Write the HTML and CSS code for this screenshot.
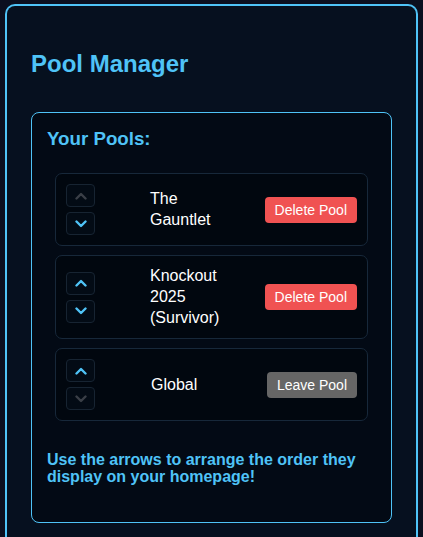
FILE: index.html
```html
<!DOCTYPE html>
<html>
<head>
<meta charset="utf-8">
<link rel="stylesheet" href="styles.css">
</head>
<body>
<div class="card">
  <h2 class="title">Pool Manager</h2>
  <div class="panel">
    <h3 class="panel-title">Your Pools:</h3>
    <ul class="pools">
      <li class="pool">
        <div class="arrows">
          <button class="arrow disabled"><svg viewBox="0 0 12 8" width="12" height="8"><path d="M1.5 6.5 L6 2 L10.5 6.5" /></svg></button>
          <button class="arrow"><svg viewBox="0 0 12 8" width="12" height="8"><path d="M1.5 1.5 L6 6 L10.5 1.5" /></svg></button>
        </div>
        <div class="name">The Gauntlet</div>
        <button class="action delete">Delete Pool</button>
      </li>
      <li class="pool">
        <div class="arrows">
          <button class="arrow"><svg viewBox="0 0 12 8" width="12" height="8"><path d="M1.5 6.5 L6 2 L10.5 6.5" /></svg></button>
          <button class="arrow"><svg viewBox="0 0 12 8" width="12" height="8"><path d="M1.5 1.5 L6 6 L10.5 1.5" /></svg></button>
        </div>
        <div class="name">Knockout 2025 (Survivor)</div>
        <button class="action delete">Delete Pool</button>
      </li>
      <li class="pool">
        <div class="arrows">
          <button class="arrow"><svg viewBox="0 0 12 8" width="12" height="8"><path d="M1.5 6.5 L6 2 L10.5 6.5" /></svg></button>
          <button class="arrow disabled"><svg viewBox="0 0 12 8" width="12" height="8"><path d="M1.5 1.5 L6 6 L10.5 1.5" /></svg></button>
        </div>
        <div class="name global">Global</div>
        <button class="action leave">Leave Pool</button>
      </li>
    </ul>
    <p class="hint">Use the arrows to arrange the order they display on your homepage!</p>
  </div>
</div>
</body>
</html>
```
FILE: styles.css
```css
html, body {
  margin: 0;
  padding: 0;
}
body {
  background: #0b0f1f;
  font-family: "Liberation Sans", Arial, sans-serif;
  padding: 4px 5px 0 5px;
}
.card {
  background: #06101f;
  border: 2px solid #4fc3f7;
  border-bottom: none;
  border-radius: 10px 10px 0 0;
  padding: 44px 24px 40px 24px;
  min-height: 560px;
}
.title {
  margin: 0 0 34px 0;
  font-size: 24px;
  font-weight: bold;
  color: #4fc3f7;
  line-height: 27.6px;
}
.panel {
  background: #030a15;
  border: 1px solid #4fc3f7;
  border-radius: 8px;
  padding: 15px 15px 37px 15px;
}
.panel-title {
  margin: 0 0 24px 0;
  font-size: 18.72px;
  font-weight: bold;
  color: #4fc3f7;
  line-height: 21.5px;
}
.pools {
  list-style: none;
  margin: 0 8px;
  padding: 0;
  display: flex;
  flex-direction: column;
  gap: 9px;
}
.pool {
  display: flex;
  align-items: center;
  background: #01070f;
  border: 1px solid #17283a;
  border-radius: 7px;
  padding: 10px;
}
.arrows {
  display: flex;
  flex-direction: column;
  gap: 5px;
}
.arrow {
  width: 29px;
  height: 23px;
  padding: 0;
  display: flex;
  align-items: center;
  justify-content: center;
  background: #030b15;
  border: 1px solid #172432;
  border-radius: 4px;
}
.arrow svg path {
  fill: none;
  stroke: #4fc3f7;
  stroke-width: 2.4;
  stroke-linecap: round;
  stroke-linejoin: round;
}
.arrow.disabled svg path {
  stroke: #3a3f47;
}
.name {
  margin-left: 55px;
  width: 80px;
  color: #ffffff;
  font-size: 16px;
  line-height: 20.8px;
}
.name.global {
  margin-left: 56px;
}
.action {
  margin-left: auto;
  font-family: "Liberation Sans", Arial, sans-serif;
  font-size: 14px;
  line-height: 16px;
  color: #ffffff;
  border: none;
  border-radius: 4px;
  padding: 5px 10px;
}
.delete {
  background: #f05252;
}
.leave {
  background: #666666;
}
.hint {
  margin: 30px 0 0 0;
  color: #4fc3f7;
  font-size: 16px;
  font-weight: bold;
  line-height: 17px;
}
```
